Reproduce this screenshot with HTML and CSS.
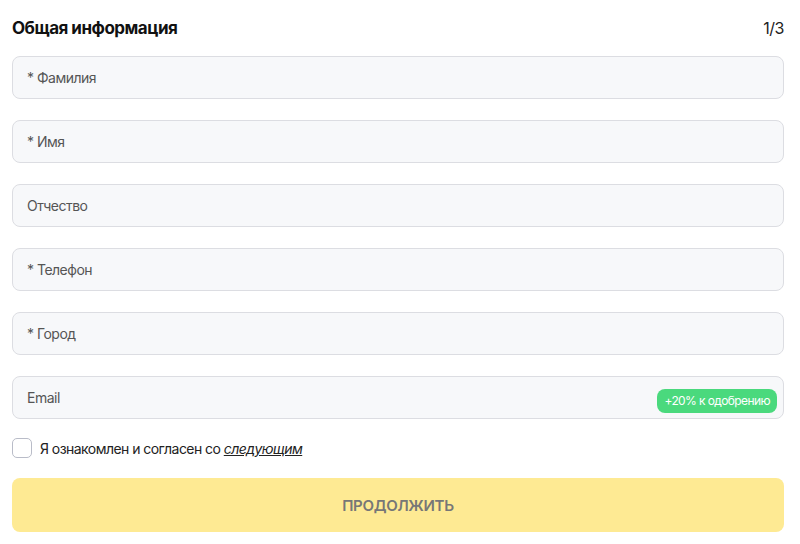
FILE: index.html
```html
<!DOCTYPE html>
<html lang="ru">
<head>
    <meta charset="UTF-8">
    <meta name="viewport" content="width=device-width, initial-scale=1.0">
    <title>Общая информация</title>
    <link rel="stylesheet" href="styles.css">
</head>
<body>
    <div class="form">
        <div class="form-header">
            <div class="form-title">Общая информация</div>
            <div class="form-step">1/3</div>
        </div>
        <div class="fields">
            <input class="field" type="text" placeholder="* Фамилия">
            <input class="field" type="text" placeholder="* Имя">
            <input class="field" type="text" placeholder="Отчество">
            <input class="field" type="text" placeholder="* Телефон">
            <input class="field" type="text" placeholder="* Город">
            <div class="field-wrap">
                <input class="field" type="text" placeholder="Email">
                <span class="badge">+20% к одобрению</span>
            </div>
        </div>
        <label class="agree">
            <span class="checkbox"></span>
            <span>Я ознакомлен и согласен со <a href="#" class="agree-link">следующим</a></span>
        </label>
        <button class="submit">ПРОДОЛЖИТЬ</button>
    </div>
</body>
</html>
```
FILE: styles.css
```css
body {
    margin: 0;
    font-family: Inter, "Noto Sans", sans-serif;
    background: #fff;
    color: #111;
}

.form {
    padding: 16px 16px 0 12px;
}

.form-header {
    display: flex;
    justify-content: space-between;
    align-items: center;
    height: 24px;
}

.form-title {
    font-size: 17px;
    font-weight: 700;
    letter-spacing: -0.5px;
}

.form-step {
    font-size: 16px;
    color: #222;
    letter-spacing: -0.5px;
}

.fields {
    display: flex;
    flex-direction: column;
    gap: 21px;
    margin-top: 16px;
}

.field {
    display: block;
    width: 100%;
    box-sizing: border-box;
    height: 43px;
    padding: 0 14px;
    border: 1px solid #dcdde2;
    border-radius: 8px;
    background: #f7f8fa;
    font-family: inherit;
    font-size: 14px;
    letter-spacing: -0.5px;
    color: #333;
    outline: none;
}

.field::placeholder {
    color: #555;
}

.field-wrap {
    position: relative;
}

.badge {
    position: absolute;
    right: 7px;
    bottom: 6px;
    height: 24px;
    line-height: 24px;
    padding: 0 7px;
    border-radius: 8px;
    background: #4ad97d;
    color: #fff;
    font-size: 12px;
    letter-spacing: -0.6px;
}

.agree {
    display: flex;
    align-items: center;
    gap: 8px;
    margin-top: 19px;
    font-size: 14px;
    letter-spacing: -0.55px;
    color: #222;
}

.checkbox {
    width: 20px;
    height: 20px;
    box-sizing: border-box;
    border: 1.5px solid #b9bcc8;
    border-radius: 5px;
    background: #fff;
}

.agree-link {
    color: #222;
    font-style: italic;
    text-decoration: underline;
}

.submit {
    display: block;
    width: 100%;
    height: 54px;
    margin-top: 20px;
    border: none;
    border-radius: 8px;
    background: #feea93;
    color: #777;
    font-family: inherit;
    font-size: 15px;
    font-weight: 600;
    letter-spacing: -0.3px;
}
```
